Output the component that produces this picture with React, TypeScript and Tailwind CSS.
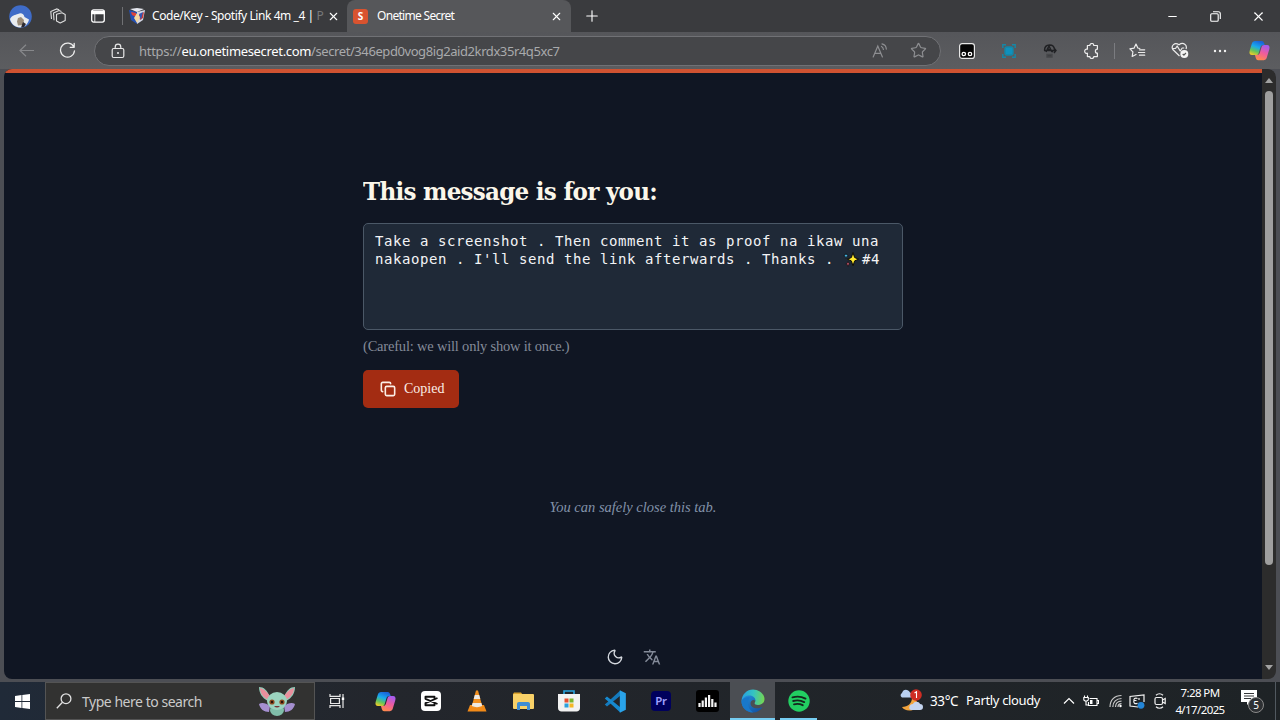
import type { ReactNode } from 'react';
import { Copy, X, Plus, Moon, Star, Minus } from 'lucide-react';

const url = {
    scheme: 'https://',
    host: 'eu.onetimesecret.com',
    path: '/secret/346epd0vog8ig2aid2krdx35r4q5xc7',
};

function Cell({ className = '', children }: { className?: string; children: ReactNode }) {
    return <div className={`flex items-center justify-center shrink-0 ${className}`}>{children}</div>;
}

function CopilotIcon({ size = 22, id }: { size?: number; id: string }) {
    return (
        <svg width={size} height={size} viewBox="0 0 24 24">
            <defs>
                <linearGradient id={`${id}-a`} x1="0.6" y1="0" x2="0.2" y2="1">
                    <stop offset="0" stopColor="#1b62d8" />
                    <stop offset="0.4" stopColor="#18a9ee" />
                    <stop offset="0.7" stopColor="#62c45c" />
                    <stop offset="1" stopColor="#f5cc27" />
                </linearGradient>
                <linearGradient id={`${id}-b`} x1="0.7" y1="0" x2="0.3" y2="1">
                    <stop offset="0" stopColor="#a45cf0" />
                    <stop offset="0.5" stopColor="#ee5c9d" />
                    <stop offset="1" stopColor="#ff8a4c" />
                </linearGradient>
            </defs>
            <path d="M17 23H10.500c-1.700 0-2.400-1.200-2.900-3l-.8-2.800h2.500c1.800 0 2.700-1 3.200-2.800l1.800-6c.5-1.700 1.200-2.600 3-2.600h3.200c2.700 0 3.500 2.200 2.700 4.900l-2.400 8C20.100 22 19 23 17 23Z" fill={`url(#${id}-b)`} />
            <path d="M7 1h7.500c1.700 0 2.400 1.200 2.900 3l.5 1.800h-1.700c-1.800 0-2.700 1-3.200 2.800l-1.800 6c-.5 1.700-1.200 2.600-3 2.600H3.500C.8 17.200 0 15 .8 12.300l2.400-8C3.900 2 5 1 7 1Z" fill={`url(#${id}-a)`} />
        </svg>
    );
}

function TabBar() {
    return (
        <div className="flex h-8 bg-[#3a3b3e] text-white">
            <Cell className="w-10">
                <svg width="23" height="23" viewBox="0 0 23 23">
                    <circle cx="11.500" cy="11.500" r="11.300" fill="#3f6cc8" />
                    <path d="M1 14c2-4 5-4 8-5 3-2 6 0 6.500 3l4.500 2.500c-1 5-5 8-9 8-5 0-9-4-10-8.500Z" fill="#e9ecef" />
                    <path d="m9 13 3-1 3 3-1 5-5 .5-1-4Z" fill="#9a8b78" />
                    <path d="m14 17 3 2-2 3-3 .5Z" fill="#2d2a30" />
                </svg>
            </Cell>
            <Cell className="w-9">
                <svg width="16" height="16" viewBox="0 0 16 16" fill="none" stroke="#dedede" strokeWidth="1.100" strokeLinejoin="round">
                    <path d="m6.500 6.200 5.500-1.400 3.200 1.600v6l-5 2.600-3.700-2Z" />
                    <path d="M4 12.300 3.500 5l5.500-2.400 2.500.8M1.500 11 .8 3.600 6.500.9l2.700.8" />
                </svg>
            </Cell>
            <Cell className="w-[43px]">
                <svg width="14" height="14" viewBox="0 0 14 14" fill="none" stroke="#fff" strokeWidth="1.300">
                    <rect x=".7" y=".9" width="12.600" height="12.200" rx="2" />
                    <path d="M1 2.500h12v2H1Z" fill="#fff" />
                    <path d="M3.800 4.500V13" strokeWidth=".8" />
                </svg>
            </Cell>

            {/* Inactive tab */}
            <div className="flex items-center w-[228px] pl-[3px]">
                <div className="w-px h-[18px] bg-[#707174]" />
                <svg className="ml-[6px]" width="16" height="16" viewBox="0 0 16 16">
                    <path d="M0 2 8 4v12L2 12Z" fill="#2450b4" />
                    <path d="m16 2-8 2v12l6-4Z" fill="#d4d7e5" />
                    <path d="m1 1 7-1 7 1-7 3Z" fill="#e6e8ef" />
                    <path d="m2 4 5 1v4L3 7Z" fill="#e04338" />
                    <path d="m15 4-5 3 1 5 3-2Z" fill="#d63a31" />
                    <path d="m8 5 3 4-3 6-3-5Z" fill="#f3d8a0" />
                    <path d="m10 6 4-2-2 8Z" fill="#3558b4" />
                </svg>
                <div className="ml-[7px] w-[167px] shrink-0 whitespace-nowrap text-[12px] leading-4 tracking-[-0.430px]">
                    Code/Key - Spotify Link 4m _4 | <span className="text-[#77787a]">P</span>
                </div>
                <X className="ml-[8px] shrink-0" size={13} strokeWidth={2} />
            </div>

            {/* Active tab */}
            <div className="flex items-center w-[224px] rounded-t-lg bg-[#56575a] pl-[6px]">
                <div className="flex items-center justify-center w-[15px] h-[15px] rounded-[3px] bg-[#d9532f] text-[10px] font-bold">S</div>
                <span className="ml-[9px] text-[12px] leading-4 tracking-[-0.700px]">Onetime Secret</span>
                <X className="ml-auto mr-2" size={13} strokeWidth={2} />
            </div>
            <Cell className="w-[41px]">
                <Plus size={18} strokeWidth={1.500} />
            </Cell>

            <div className="flex ml-auto">
                <Cell className="w-[43px]"><Minus size={13} strokeWidth={2} /></Cell>
                <Cell className="w-[43px]">
                    <svg width="11" height="11" viewBox="0 0 11 11" fill="none" stroke="#fff" strokeWidth="1.100">
                        <rect x=".7" y="2.800" width="7.500" height="7.500" rx="1" />
                        <path d="M3 .8h5.300c1.300 0 2 .7 2 2V8" />
                    </svg>
                </Cell>
                <Cell className="w-[43px]"><X size={15} strokeWidth={1.700} /></Cell>
            </div>
        </div>
    );
}

function Toolbar() {
    return (
        <div className="flex items-center h-[37px] bg-gradient-to-b from-[#55565a] to-[#5c5d60] text-white">
            <Cell className="w-[52px]">
                <svg width="15" height="13" viewBox="0 0 15 13" fill="none" stroke="#87888b" strokeWidth="1.200">
                    <path d="M15 6.500H1M7 .7 1 6.500l6 5.800" />
                </svg>
            </Cell>
            <Cell className="w-[30px]">
                <svg width="17" height="17" viewBox="0 0 17 17" fill="none" stroke="#ececec" strokeWidth="1.300" strokeLinecap="round" strokeLinejoin="round">
                    <path d="M14.800 5A7 7 0 1 0 15.500 8.800M15.200 1.300V5.300H11.200" />
                </svg>
            </Cell>
            <div className="ml-3 flex items-center w-[847px] h-[30px] rounded-full border border-[#707175] bg-[#454649]">
                <svg className="ml-[16px]" width="14" height="16" viewBox="0 0 14 16" fill="none" stroke="#e8e8e8" strokeWidth="1.200">
                    <rect x="1.200" y="5.500" width="11.600" height="9" rx="1.500" />
                    <path d="M4.200 5.500V4a2.800 2.800 0 0 1 5.600 0v1.500" />
                    <circle cx="7" cy="10" r=".9" fill="#fff" stroke="none" />
                </svg>
                <div className="ml-[14px] flex text-[13px] leading-5 text-[#a9aaac] whitespace-nowrap">
                    <span className="tracking-[-0.300px]">{url.scheme}</span>
                    <span className="text-white tracking-[-0.330px]">{url.host}</span>
                    <span className="tracking-[-0.420px]">{url.path}</span>
                </div>
                <svg className="ml-auto" width="16" height="16" viewBox="0 0 16 16" fill="none" stroke="#8d8e91" strokeWidth="1.200" strokeLinecap="round">
                    <path d="M1.200 14 5.800 3l4.600 11M2.800 10.300h6" />
                    <path d="M9.500 3.500c1.200.6 1.800 1.600 1.900 3M10 .9c2.800.7 4.200 2.600 4.300 5.200" />
                </svg>
                <Star className="ml-[22px] mr-[13px]" size={17} strokeWidth={1.700} color="#8d8e91" />
            </div>

            <Cell className="w-[52px]">
                <svg width="16" height="16" viewBox="0 0 16 16">
                    <rect x=".6" y=".6" width="14.800" height="14.800" rx="2.500" fill="#050505" stroke="#e8e8e8" strokeWidth="1.200" />
                    <g fill="none" stroke="#fff" strokeWidth="1.300">
                        <circle cx="4.800" cy="11" r="1.700" />
                        <circle cx="11" cy="11" r="1.700" />
                    </g>
                </svg>
            </Cell>
            <Cell className="w-[31px]">
                <svg width="14" height="14" viewBox="0 0 14 14" fill="none" stroke="#1587a7" strokeWidth="1.400">
                    <path d="M.8 4V.8H4M10 .8h3.200V4M13.200 10v3.200H10M4 13.200H.8V10" />
                    <rect x="3" y="3" width="8" height="8" rx="2" fill="#0f91bd" />
                </svg>
            </Cell>
            <Cell className="w-[52px]">
                <svg width="14" height="14" viewBox="0 0 14 14" fill="none" stroke="#202124" strokeWidth="1.400">
                    <path d="M1.500 6.500C1.500 3 3.500 1 6.500 1s5 2 5 5M1 6.500h12M3 8l3-6 3 6M4 4l6 4M11 4l2 2.500L11 9" />
                    <path d="M4 10.500h5v2.500H4Z" fill="#3c3d40" stroke="#46474a" />
                </svg>
            </Cell>
            <Cell className="w-[31px]">
                <svg width="15" height="16" viewBox="0 0 15 16" fill="none" stroke="#ececec" strokeWidth="1.200" strokeLinejoin="round">
                    <path d="M3.400 2.500h2.400a2 2 0 0 1 4 0h3.600v3.700a2 2 0 0 0 0 4v3.400H9.800a2 2 0 0 1-4 0H3.400v-3.400a2.100 2.100 0 1 1 0-4Z" />
                </svg>
            </Cell>
            <div className="ml-[7px] w-px h-4 bg-[#7b7c80]" />
            <Cell className="w-[45px]">
                <svg width="17" height="16" viewBox="0 0 17 16" fill="none" stroke="#ececec" strokeWidth="1.200" strokeLinejoin="round" strokeLinecap="round">
                    <path d="M10.800 5.500 8.800 5 7 1 5 5.200.9 5.800l3 3-.7 4.700L7 11.500" />
                    <path d="M10.500 6.800h5.200M9.500 9.500h6.200M10.500 12.200h5.200" />
                </svg>
            </Cell>
            <Cell className="w-[40px]">
                <svg width="18" height="17" viewBox="0 0 18 17" fill="none" stroke="#ececec" strokeWidth="1.200" strokeLinejoin="round">
                    <path d="M8.500 14 1.800 7.500C-.2 4 3.500-.5 8 2.800c4.500-3.300 8.500.5 7 4.200" />
                    <path d="M1.500 6.500h3L6.200 4l3 5 2-3h2" />
                    <circle cx="13.300" cy="12" r="4" fill="#f4f4f4" stroke="none" />
                    <path d="m11.700 12 1.200 1.200 2-2.200" stroke="#555" />
                </svg>
            </Cell>
            <Cell className="w-[40px]">
                <svg width="14" height="4" viewBox="0 0 14 4" fill="#f2f2f2">
                    <circle cx="2" cy="2" r="1.200" />
                    <circle cx="7" cy="2" r="1.200" />
                    <circle cx="12" cy="2" r="1.200" />
                </svg>
            </Cell>
            <Cell className="w-[38px]"><CopilotIcon id="side" size={21} /></Cell>
        </div>
    );
}

function Sparkles() {
    return (
        <svg className="inline-block align-[-3px] mr-[3px]" width="16" height="15" viewBox="0 0 16 15" stroke="#0a0a0a" strokeWidth="1">
            <path d="m10 .5 1.600 5 4 1.700-4 1.700-1.600 5-1.600-5-4-1.700 4-1.700Z" fill="#ffe92e" />
            <path d="m3 1 .8 2 1.700.7-1.700.7L3 6.500l-.8-2.100L.7 3.700l1.500-.7Z" fill="#49b8e6" strokeWidth=".6" />
            <path d="m5 9.500.7 1.800 1.300.6-1.300.6L5 14.300l-.7-1.800-1.400-.6 1.400-.6Z" fill="#e9657c" strokeWidth=".6" />
        </svg>
    );
}

function SecretPage() {
    return (
        <div className="flex flex-1 flex-col overflow-hidden border-t-[4px] border-[#cf5231] bg-[#101623]">
            <div className="mx-auto mt-[101px] w-[540px] font-['Liberation_Serif',serif]">
                <h1 className="h-9 origin-left scale-x-[0.922] whitespace-nowrap font-['DejaVu_Serif',serif] text-[25px] font-bold leading-9 tracking-[-0.800px] text-[#fbf6ea]">
                    This message is for you:
                </h1>
                <div className="mt-[13px] h-[107px] rounded-[5px] border border-[#4b5867] bg-[#1f2937] px-[11px] pt-[8px] whitespace-nowrap font-['DejaVu_Sans_Mono',monospace] text-[14px] leading-[18px] tracking-[0.572px] text-[#f3f4f6]">
                    <div>Take a screenshot . Then comment it as proof na ikaw una</div>
                    <div>nakaopen . I'll send the link afterwards . Thanks . <Sparkles />#4</div>
                </div>
                <p className="mt-[6px] text-[14.500px] leading-5 tracking-[-0.200px] text-[#848b99]">(Careful: we will only show it once.)</p>
                <button className="mt-[14px] flex items-center w-24 h-[38px] rounded-[5px] bg-[#a32c12] pl-[17px] text-[14px] text-[#fbeee6]">
                    <Copy size={16} strokeWidth={2.400} />
                    <span className="ml-2 pb-[2px]">Copied</span>
                </button>
            </div>
            <p className="mt-[89px] text-center font-['Liberation_Serif',serif] text-[14.500px] italic leading-5 text-[#8292a9]">You can safely close this tab.</p>
            <div className="mt-[131px] ml-px flex justify-center gap-[19px]">
                <Moon size={18} strokeWidth={1.800} color="#d5d9df" />
                <svg width="18" height="18" viewBox="0 0 24 24" fill="#848b99">
                    <path d="m12.870 15.070-2.540-2.510.03-.03A17.520 17.520 0 0 0 14.070 6H17V4h-7V2H8v2H1v2h11.170C11.500 7.920 10.440 9.750 9 11.350 8.070 10.320 7.300 9.190 6.690 8h-2c.73 1.630 1.730 3.170 2.980 4.560l-5.090 5.020L4 19l5-5 3.110 3.110.76-2.040ZM18.500 10h-2L12 22h2l1.120-3h4.750L21 22h2l-4.500-12Zm-2.620 7 1.620-4.330L19.120 17h-3.240Z" />
                </svg>
            </div>
        </div>
    );
}

function Scrollbar() {
    return (
        <div className="flex flex-col items-center w-[14px] rounded-tr-lg rounded-br-md bg-[#2c2c2c] py-[9px]">
            <div className="border-x-[4px] border-b-[5px] border-x-transparent border-b-[#a2a2a2]" />
            <div className="mt-2 h-[474px] w-2 rounded-full bg-[#9f9f9f]" />
            <div className="mt-auto border-x-[4px] border-t-[5px] border-x-transparent border-t-[#a2a2a2]" />
        </div>
    );
}

function Gremlin() {
    return (
        <svg width="38" height="30" viewBox="0 0 38 30">
            <path d="M1 18c3-2 7-1 11 2l-1 6c-5 0-9-3-10-8ZM37 18c-3-2-7-1-11 2l1 6c5 0 9-3 10-8Z" fill="#a58fcf" />
            <path d="M12 11C9 4 6 1 1 1c0 6 3 11 9 14ZM26 11c3-7 6-10 11-10 0 6-3 11-9 14Z" fill="#8fcdb9" />
            <path d="M12 10C8 5 6 3 2 2c0 5 3 9 8 12ZM26 10c4-5 6-7 10-8 0 5-3 9-8 12Z" fill="#e98f9d" />
            <ellipse cx="19" cy="24" rx="7" ry="6" fill="#80bea9" />
            <ellipse cx="19" cy="15" rx="10" ry="9" fill="#9bd3bf" />
            <circle cx="14" cy="16" r="2.600" fill="#8e4a20" />
            <circle cx="24" cy="16" r="2.600" fill="#8e4a20" />
            <circle cx="14" cy="16" r="1.200" fill="#26130c" />
            <circle cx="24" cy="16" r="1.200" fill="#26130c" />
            <path d="M16 20c2 2 4 2 6 0Z" fill="#7c3235" />
        </svg>
    );
}

function CapCut() {
    return (
        <svg width="20" height="20" viewBox="0 0 20 20">
            <rect width="20" height="20" rx="4" fill="#fff" />
            <path d="M13.500 7.500V5.800H4.500v2L16.500 13M13.500 12.500v1.700H4.500v-2L16.500 7" fill="none" stroke="#111" strokeWidth="1.900" strokeLinejoin="round" />
        </svg>
    );
}

function Vlc() {
    return (
        <svg width="20" height="22" viewBox="0 0 20 22">
            <path d="M3 15h14l2.500 6.500H.5Z" fill="#f18a18" />
            <path d="m9 .5h2L15.500 17c-3 1.800-8 1.800-11 0Z" fill="#f29020" />
            <path d="M7.800 5h4.400l1.100 4H6.700ZM5.600 13h8.800l.8 3c-3 1.500-7.400 1.500-10.400 0Z" fill="#eee9e3" />
        </svg>
    );
}

function Explorer() {
    return (
        <svg width="21" height="18" viewBox="0 0 21 18">
            <path d="M0 2 1 .5h7L10 3H0Z" fill="#dba32d" />
            <rect y="2" width="21" height="15" rx="1" fill="#f8d168" />
            <path d="M4 18v-6c0-1.200.8-2 2-2h9c1.200 0 2 .8 2 2v6h-3v-4H7v4Z" fill="#3e8dd3" />
        </svg>
    );
}

function Store() {
    return (
        <svg width="22" height="22" viewBox="0 0 22 22">
            <path d="M6 6V1h10v5" fill="none" stroke="#2aa4df" strokeWidth="1.600" />
            <path d="M0 4h22v14c0 2-1.500 3.500-3.500 3.500h-15C1.500 21.500 0 20 0 18Z" fill="#f2f2f2" />
            <path d="M6.500 8.500h4v4h-4Z" fill="#e65031" />
            <path d="M11.500 8.500h4v4h-4Z" fill="#79b52b" />
            <path d="M6.500 13.500h4v4h-4Z" fill="#2ba1dd" />
            <path d="M11.500 13.500h4v4h-4Z" fill="#f3b622" />
        </svg>
    );
}

function VsCode() {
    return (
        <svg width="23" height="23" viewBox="0 0 24 24">
            <path d="m17 .5-12 11L.8 15.200l2.300 2L17 6Z" fill="#147abd" />
            <path d="m17 23.500-12-11L.8 8.800l2.300-2L17 18Z" fill="#1689cf" />
            <path d="m16.500.3 6.300 3v17.400l-6.300 3Z" fill="#29a3ea" />
        </svg>
    );
}

function Premiere() {
    return (
        <div className="flex items-center justify-center w-5 h-5 rounded-[4px] bg-[#00005c] text-[11.500px] font-semibold tracking-tight text-[#a0a0ff]">Pr</div>
    );
}

function Deezer() {
    return (
        <svg width="23" height="22" viewBox="0 0 23 22">
            <rect width="23" height="22" rx="3" fill="#000" />
            <path d="M3.500 13v4M6.700 10.500v6.500M9.900 7.500v9.500M13.100 5v12M16.300 9v8M19.500 12.500v4.500" stroke="#f4f4f4" strokeWidth="2.200" />
        </svg>
    );
}

function Edge() {
    return (
        <svg width="24" height="24" viewBox="0 0 24 24">
            <defs>
                <linearGradient id="edge-top" x1="0" y1=".4" x2="1" y2=".5">
                    <stop offset="0" stopColor="#269fe2" />
                    <stop offset=".5" stopColor="#35c3c1" />
                    <stop offset="1" stopColor="#75d651" />
                </linearGradient>
                <linearGradient id="edge-low" x1="0" y1="0" x2="1" y2="1">
                    <stop offset="0" stopColor="#2693df" />
                    <stop offset="1" stopColor="#114a9b" />
                </linearGradient>
            </defs>
            <path d="M.5 12C1 5 6 .5 12 .5S23.500 5 23.500 10c0 4-3 6-6.500 6-2.500 0-3.700-1-3.300-2.200C15.500 11 13 8 9 8 5 8 2 9.500.5 12Z" fill="url(#edge-top)" />
            <path d="M.5 12C1.500 8.500 5 6.500 8.500 6.500S14.800 9 14.500 12c-2-2-5-.5-5 2.500 0 4 5.500 6.500 12 3.500-2 3.500-5.500 5.500-9.500 5.500C5.500 23.500.3 18.500.5 12Z" fill="url(#edge-low)" />
            <path d="M9 8.500C6 11.500 6 19 12 23.400 5.500 23.500.5 18.500.5 12 2 9 5.500 7.500 9 8.500Z" fill="#1878cb" />
        </svg>
    );
}

function Spotify() {
    return (
        <svg width="22" height="22" viewBox="0 0 22 22">
            <circle cx="11" cy="11" r="10.700" fill="#22ce62" />
            <path d="M4.500 7.400c4.500-1.300 9-.9 13 1.200M5.200 11c4-1.100 7.500-.7 11 1.100M6 14.300c3.200-.8 6-.5 8.700.9" fill="none" stroke="#15261e" strokeWidth="1.900" strokeLinecap="round" />
        </svg>
    );
}

const apps = [
    { name: 'copilot', icon: <CopilotIcon id="task" size={21} /> },
    { name: 'capcut', icon: <CapCut /> },
    { name: 'vlc', icon: <Vlc /> },
    { name: 'explorer', icon: <Explorer /> },
    { name: 'store', icon: <Store /> },
    { name: 'code', icon: <VsCode /> },
    { name: 'premiere', icon: <Premiere /> },
    { name: 'deezer', icon: <Deezer /> },
    { name: 'edge', icon: <Edge />, state: 'w-[45px] border-[#76cdf2] bg-[#4b4e53]' },
    { name: 'spotify', icon: <Spotify />, state: 'w-[37px] mx-[5px] border-[#76cdf2]' },
];

function Tray() {
    return (
        <div className="ml-auto flex items-center text-white">
            <svg width="24" height="24" viewBox="0 0 24 24">
                <path d="M3 8.500h9a3 3 0 0 0-1-5C9-.5 4-.3 3 4a2.500 2.500 0 0 0 0 4.500Z" fill="#b8cff0" />
                <path d="M13 9c0 5-4 9-10 9 2 4 10 5 14 1 3-4 1-9-4-10Z" fill="#f3a43c" />
                <path d="M12 21h9a3 3 0 0 0 0-6c-1-3-6-3-7 0-4 0-5 5-2 6Z" fill="#c4d5f0" />
                <circle cx="17" cy="6" r="5.800" fill="#cf2d23" />
                <path d="m15.500 4 2-1.300V9" fill="none" stroke="#fff" strokeWidth="1.100" />
            </svg>
            <span className="ml-[7px] w-9 whitespace-nowrap text-[13.500px] tracking-[-0.400px]">33°C</span>
            <span className="w-[91px] whitespace-nowrap text-[13px] tracking-[-0.350px]">Partly cloudy</span>
            <svg className="ml-[6px]" width="12" height="8" viewBox="0 0 12 8" fill="none" stroke="#fff" strokeWidth="1.200"><path d="m1 6.500 5-5 5 5" /></svg>
            <svg className="ml-[8px]" width="16" height="13" viewBox="0 0 16 13" fill="none" stroke="#fff" strokeWidth="1.100">
                <path d="M6.500 3.500H14v7H5.500V7M14.500 5.500h1v3h-1M1.500.5v2M4.500.5v2M.8 2.500h4.500V5L4 6H2L.8 5ZM3 6v4h2.500" />
                <path d="M7 5h2.500v4H7Z" fill="#fff" stroke="none" />
            </svg>
            <svg className="ml-[10px]" width="13" height="14" viewBox="0 0 13 14" fill="none" stroke="#c9c9c9" strokeWidth="1.200">
                <path d="M1 13C1 6 5.500 1.500 12.500 1.500M3.800 13c0-5 3.500-8.500 8.700-8.500M6.500 13c0-3.500 2.300-5.800 6-5.800M9 13c0-2 1.300-3.300 3.500-3.300" />
                <circle cx="11.500" cy="12" r="1.200" fill="#fff" stroke="none" />
            </svg>
            <svg className="ml-[7px]" width="16" height="15" viewBox="0 0 16 15" fill="none" stroke="#f0f0f0" strokeWidth="1.200">
                <path d="M9 13 1 12V2.500L15 1v7" />
                <path d="M8.500 4.500C6 3.500 4.500 5 5 6.500h2.500M5 6.500c-1 2.500 1 4 3.500 2.700M10 4v2" />
                <circle cx="12" cy="11.300" r="3.400" fill="#2386d8" stroke="none" />
            </svg>
            <svg className="ml-[9px]" width="12" height="16" viewBox="0 0 12 16" fill="none" stroke="#f0f0f0" strokeWidth="1.200">
                <rect x="1" y="4.500" width="7.500" height="7" rx="1.500" />
                <path d="m8.500 7 2.700-1.500v5L8.500 9M2 2.300C4 .5 7 .5 9 2.300M2 13.700c2 1.800 5 1.800 7 0" />
            </svg>
            <div className="ml-[8px] w-[52px] whitespace-nowrap text-center text-[11.500px] leading-[17px] tracking-[-0.600px]">
                <div>7:28 PM</div>
                <div>4/17/2025</div>
            </div>
            <div className="relative ml-[15px] mr-[10px] w-6 h-6">
                <svg width="16" height="16" viewBox="0 0 16 16">
                    <path d="M0 1h16v12h-7l-3 3v-3H0Z" fill="#fff" />
                    <path d="M3 4.500h10M3 7h10M3 9.500h7" stroke="#343639" strokeWidth="1" />
                </svg>
                <div className="absolute left-[7px] top-[8px] flex items-center justify-center w-4 h-4 rounded-full border border-[#8b8b8b] bg-[#2d3033] text-[10px] leading-none">5</div>
            </div>
            <div className="w-px h-[38px] mr-1 bg-[#515960]" />
        </div>
    );
}

function Taskbar() {
    return (
        <div className="flex h-[38px] bg-gradient-to-r from-[#202a38] via-[#23262c] via-30% to-[#1e2326]">
            <Cell className="w-[45px]">
                <svg width="15" height="15" viewBox="0 0 15 15" fill="#fff">
                    <path d="m0 2 6.500-.9v6H0ZM7.300 1 15 0v7.100H7.300ZM0 7.900h6.500v6L0 13ZM7.300 7.900H15V15l-7.700-1.100Z" />
                </svg>
            </Cell>
            <div className="flex items-center w-[270px] border border-[#545454] bg-[#323231] pl-[10px] pr-[18px]">
                <svg width="16" height="16" viewBox="0 0 16 16" fill="none" stroke="#e2e2e2" strokeWidth="1.300">
                    <circle cx="10" cy="5.700" r="4.900" />
                    <path d="M6.500 9.200.8 15.200" />
                </svg>
                <span className="ml-[10px] text-[14px] tracking-[-0.470px] text-[#cacaca]">Type here to search</span>
                <div className="ml-auto"><Gremlin /></div>
            </div>
            <Cell className="w-[47px] pr-[3px]">
                <svg width="16" height="16" viewBox="0 0 16 16" fill="none" stroke="#e8e8e8" strokeWidth="1.200">
                    <path d="M1 1v2.300h10V1M1 15v-2.300h10V15M1.600 5.500h8.800v5H1.600ZM14 1v14" />
                    <path d="M12.800 4.500h2.400V7h-2.400Z" fill="#fff" stroke="none" />
                </svg>
            </Cell>
            {apps.map((app) => (
                <div key={app.name} className={`flex items-center justify-center border-b-2 pt-[2px] ${app.state ?? 'w-[46px] border-transparent'}`}>
                    {app.icon}
                </div>
            ))}
            <Tray />
        </div>
    );
}

export default function App() {
    return (
        <div className="flex h-[720px] w-[1280px] flex-col overflow-hidden bg-[#4c4e54] font-['Noto_Sans','Open_Sans',sans-serif]">
            <TabBar />
            <Toolbar />
            <div className="mx-1 mb-[3px] flex h-[610px] overflow-hidden rounded-lg">
                <SecretPage />
                <Scrollbar />
            </div>
            <Taskbar />
        </div>
    );
}
